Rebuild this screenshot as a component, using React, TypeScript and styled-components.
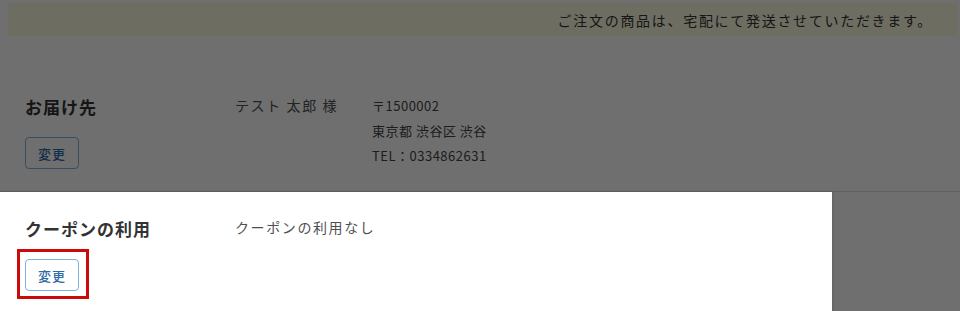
import React from 'react';
import styled, { createGlobalStyle } from 'styled-components';

const GlobalStyle = createGlobalStyle`
  html, body {
    margin: 0;
    padding: 0;
    background: #ffffff;
    overflow: hidden;
  }
  body {
    font-family: "Noto Sans CJK JP", "Noto Sans", sans-serif;
    color: #333333;
  }
`;

const Page = styled.div`
  position: relative;
  width: 960px;
  height: 311px;
  overflow: hidden;
  background: #ffffff;
`;

const Notice = styled.div`
  margin: 3px 3px 0 8px;
  height: 33px;
  display: flex;
  align-items: center;
  justify-content: flex-end;
  padding-right: 24px;
  background: #fcfbe0;
  font-size: 14px;
  color: #333333;
  letter-spacing: 1.7px;
`;

const Row = styled.section<{ $top: number; $divider?: boolean }>`
  position: relative;
  display: grid;
  grid-template-columns: 210px 137px 1fr;
  padding: ${(p) => p.$top}px 0 22px 25px;
  border-bottom: ${(p) => (p.$divider ? '1px solid #dddddd' : 'none')};
`;

const LabelCol = styled.div`
  display: flex;
  flex-direction: column;
  align-items: flex-start;
  gap: 19px;
`;

const Label = styled.h3`
  margin: 0;
  font-size: 17px;
  line-height: 22px;
  font-weight: 700;
  color: #333333;
  letter-spacing: 1px;
`;

const Value = styled.div<{ $span?: boolean }>`
  margin-top: -3px;
  font-size: 14px;
  line-height: 25px;
  color: #505050;
  letter-spacing: 1.6px;
  grid-column: ${(p) => (p.$span ? '2 / 4' : 'auto')};
`;

const Address = styled.div`
  margin-top: -3px;
  font-size: 13px;
  line-height: 25px;
  color: #444444;
  letter-spacing: 0.5px;
`;

const ButtonWrap = styled.div`
  position: relative;
`;

const ChangeButton = styled.button`
  display: block;
  width: 54px;
  height: 32px;
  padding: 0;
  border: 1px solid #7eb1de;
  border-radius: 4px;
  background: #ffffff;
  color: #2f6ba5;
  font-family: inherit;
  font-size: 13px;
  font-weight: 500;
  letter-spacing: 1px;
  cursor: pointer;
`;

const Marker = styled.div`
  position: absolute;
  left: -8px;
  top: -10px;
  right: -10px;
  bottom: -8px;
  border: 3px solid #cc0a0a;
  pointer-events: none;
`;

const Spotlight = styled.div`
  position: absolute;
  left: 0;
  top: 0;
  width: 832px;
  height: 160px;
  box-shadow: 0 0 0 2000px rgba(0, 0, 0, 0.565), 1px 0 2px rgba(0, 0, 0, 0.15);
  pointer-events: none;
  z-index: 2;
`;

const CouponRow = styled(Row)`
  min-height: 100px;
`;

export default function App() {
  return (
    <Page>
      <GlobalStyle />
      <Notice>ご注文の商品は、宅配にて発送させていただきます。</Notice>

      <Row $top={60} $divider>
        <LabelCol>
          <Label>お届け先</Label>
          <ChangeButton>変更</ChangeButton>
        </LabelCol>
        <Value>テスト 太郎 様</Value>
        <Address>
          〒1500002
          <br />
          東京都 渋谷区 渋谷
          <br />
          TEL：0334862631
        </Address>
      </Row>

      <CouponRow $top={26}>
        <Spotlight />
        <LabelCol>
          <Label>クーポンの利用</Label>
          <ButtonWrap>
            <ChangeButton>変更</ChangeButton>
            <Marker />
          </ButtonWrap>
        </LabelCol>
        <Value $span>クーポンの利用なし</Value>
      </CouponRow>
    </Page>
  );
}
